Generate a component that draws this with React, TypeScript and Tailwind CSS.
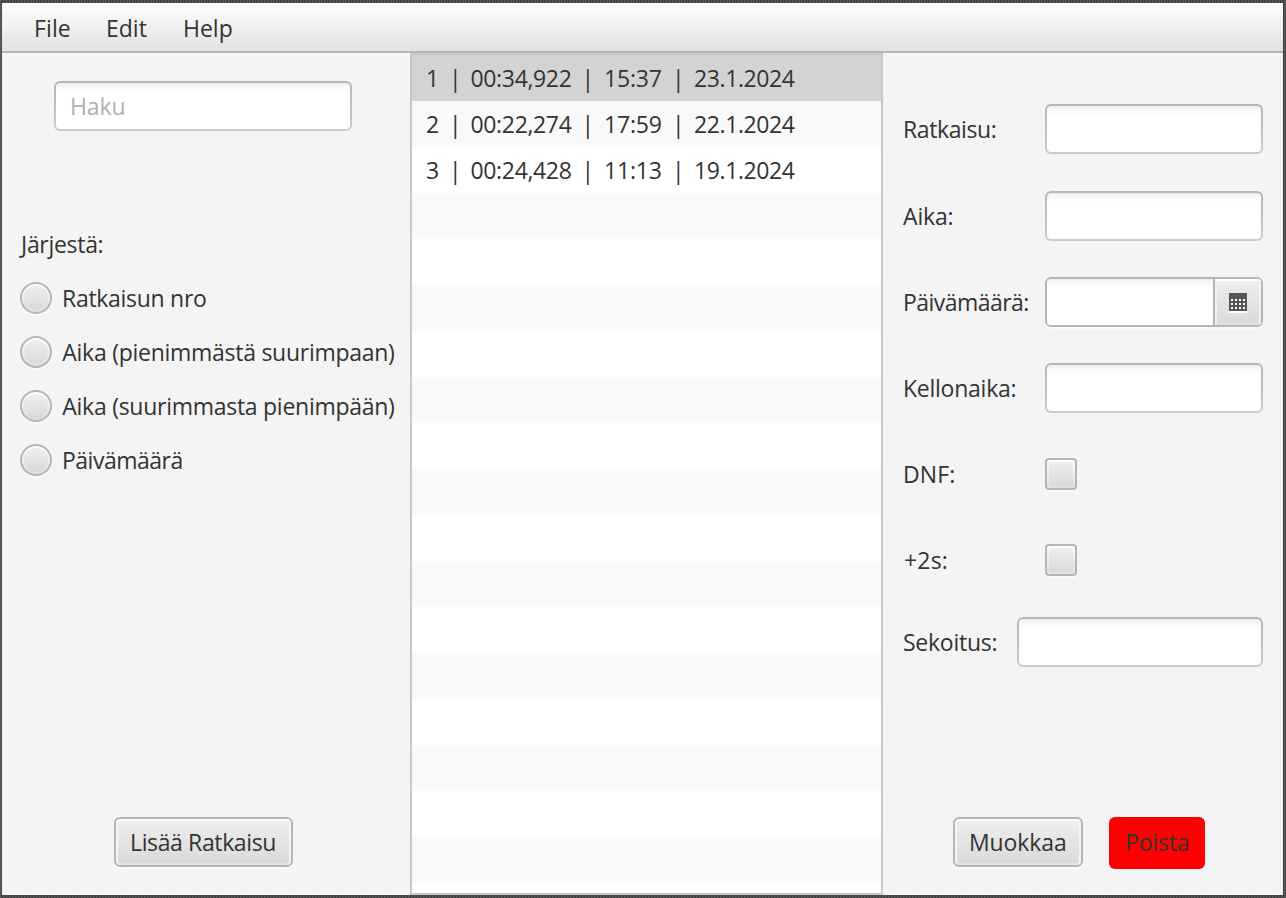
import type { ReactNode } from 'react';

const fieldFrame =
  'box-border h-[50px] shrink-0 rounded-[6px] bg-[linear-gradient(to_bottom,#b6b6b6,#cbcbcb)] p-[2px]';
const fieldInner =
  'h-full w-full rounded-[4px] border-0 bg-[linear-gradient(to_bottom,#ededed_0px,#f8f8f8_4px,#ffffff_9px)] leading-[46px] outline-none';
const raised = 'bg-[linear-gradient(to_bottom,#efefef,#d9d9d9)] border-2 border-[#b5b5b5]';

function Field({ width, placeholder, label }: { width: string; placeholder?: string; label: string }) {
  return (
    <div className={`${fieldFrame} ${width}`}>
      <input
        aria-label={label}
        placeholder={placeholder}
        className={`${fieldInner} block pl-[14px] tracking-[-0.1px] placeholder:text-[#b0b0b0] placeholder:opacity-100`}
      />
    </div>
  );
}

function Button({ children, className }: { children: ReactNode; className: string }) {
  return (
    <button
      className={`${raised} flex h-[50px] shrink-0 items-center rounded-[6px] p-[2px] leading-[46px] whitespace-nowrap shadow-[0_2px_0_0_#fcfcfc,inset_0_2px_0_0_#fdfdfd,inset_2px_0_0_0_#f5f5f5,inset_-2px_0_0_0_#f5f5f5,inset_0_-2px_0_0_#e3e3e3] ${className}`}
    >
      {children}
    </button>
  );
}

function Label({ children, spacing }: { children: ReactNode; spacing: string }) {
  return <span className={`leading-[50px] whitespace-nowrap ${spacing}`}>{children}</span>;
}

function CheckBox() {
  return (
    <div className="h-8 w-8 rounded-[4px] border-2 border-[#b5b5b5] bg-[linear-gradient(to_bottom,#fdfdfd,#e0e0e0)] p-[2px] shadow-[0_2px_0_0_#fbfbfb]">
      <div className="h-full w-full rounded-[2px] bg-[linear-gradient(to_bottom,#efefef,#d9d9d9)]" />
    </div>
  );
}

function CalendarIcon() {
  const cols = [2, 6, 10, 14];
  const rows = [6, 10, 14];
  return (
    <svg width="18" height="20" viewBox="0 0 18 20" shapeRendering="crispEdges">
      <rect y="2" width="18" height="18" fill="#fff" />
      <rect width="18" height="18" fill="#555" />
      {rows.map((y) => cols.map((x) => <rect key={`${x}-${y}`} x={x} y={y} width="2" height="2" fill="#fff" />))}
    </svg>
  );
}

const sortOptions = [
  { text: 'Ratkaisun nro', cls: 'pl-[10px] tracking-[-0.29px]' },
  { text: 'Aika (pienimmästä suurimpaan)', cls: 'pl-[10.3px] tracking-[-0.27px]' },
  { text: 'Aika (suurimmasta pienimpään)', cls: 'pl-[10.3px] tracking-[-0.27px]' },
  { text: 'Päivämäärä', cls: 'pl-[10px] tracking-[-0.5px]' },
];

const solves = [
  { n: '1', time: '00:34,922', clock: '15:37', date: '23.1.2024' },
  { n: '2', time: '00:22,274', clock: '17:59', date: '22.1.2024' },
  { n: '3', time: '00:24,428', clock: '11:13', date: '19.1.2024' },
];

const formRow = 'flex h-[50px] items-center';

export default function App() {
  return (
    <div className="flex h-[898px] w-[1286px] flex-col overflow-hidden bg-[#484848] bg-[repeating-linear-gradient(to_right,#5a5a5a_0px,#5a5a5a_1px,#3c3c3c_2px,#3c3c3c_3px)] pt-[3px] pr-[3px] pb-[3px] pl-[2px] font-['Open_Sans','Noto_Sans',sans-serif] text-[23px] text-[#333333]">
      <nav className="flex h-[50px] shrink-0 border-b-2 border-[#b5b5b5] bg-[linear-gradient(to_bottom,#fdfdfd,#e3e3e3)] pt-[2px] pl-[32px] leading-[46px]">
        <span className="w-[72px] tracking-[0.1px]">File</span>
        <span className="w-[77px]">Edit</span>
        <span>Help</span>
      </nav>

      <div className="flex h-[842px] bg-[#f4f4f4]">
        <aside className="flex w-[408px] shrink-0 flex-col">
          <div className="pt-[28px] pl-[52px]">
            <Field width="w-[298px]" placeholder="Haku" label="Haku" />
          </div>
          <div className="mt-[88px] pl-[19px]">
            <Label spacing="block tracking-[-0.3px]">Järjestä:</Label>
          </div>
          <div className="mt-[4px] flex flex-col gap-[4px] pl-[18px]">
            {sortOptions.map((o) => (
              <label key={o.text} className="flex h-[50px] items-center">
                <span className="h-8 w-8 shrink-0 rounded-full border-2 border-[#b5b5b5] bg-[linear-gradient(to_bottom,#fdfdfd,#e0e0e0)] p-[2px] shadow-[0_2px_0_0_#fbfbfb]">
                  <span className="block h-full w-full rounded-full bg-[linear-gradient(to_bottom,#efefef,#d9d9d9)]" />
                </span>
                <span className={`leading-[50px] whitespace-nowrap ${o.cls}`}>{o.text}</span>
              </label>
            ))}
          </div>
          <div className="mt-auto pb-[28px] pl-[112px]">
            <Button className="w-[179px] pl-[14px] tracking-[-0.37px]">Lisää Ratkaisu</Button>
          </div>
        </aside>

        <ul className="w-[473px] shrink-0 overflow-hidden border-2 border-[#c8c8c8] leading-[46px]">
          {Array.from({ length: 19 }, (_, i) => {
            const s = solves[i];
            const bg = i === 0 ? 'bg-[#d3d3d3]' : i % 2 ? 'bg-[#f9f9f9]' : 'bg-white';
            return (
              <li key={i} className={`flex h-[46px] pl-[14px] whitespace-nowrap ${bg}`}>
                {s && (
                  <>
                    <span className="w-[23px]">{s.n}</span>
                    <span className="w-[21.5px] text-center indent-[-9px]">|</span>
                    <span className="w-[111.5px] tracking-[-0.34px]">{s.time}</span>
                    <span className="w-[22px] indent-[-0.5px]">|</span>
                    <span className="w-[68px] tracking-[-0.2px]">{s.clock}</span>
                    <span className="w-[22px]">|</span>
                    <span className="tracking-[-0.4px]">{s.date}</span>
                  </>
                )}
              </li>
            );
          })}
        </ul>

        <main className="flex min-w-0 flex-1 flex-col pt-[51px] pr-[20px] pl-[20px]">
          <div className={formRow}>
            <div className="w-[142px] shrink-0"><Label spacing="tracking-[-0.4px]">Ratkaisu:</Label></div>
            <Field width="w-[218px]" label="Ratkaisu" />
          </div>
          <div className={`${formRow} mt-[37px]`}>
            <div className="w-[142px] shrink-0"><Label spacing="tracking-[-0.15px]">Aika:</Label></div>
            <Field width="w-[218px]" label="Aika" />
          </div>
          <div className={`${formRow} mt-[36px]`}>
            <div className="w-[142px] shrink-0"><Label spacing="tracking-[-0.55px]">Päivämäärä:</Label></div>
            <div className="flex h-[50px] w-[218px] overflow-hidden rounded-[6px] border-2 border-[#b5b5b5] shadow-[0_2px_0_0_#fbfbfb]">
              <input
                aria-label="Päivämäärä"
                className="block h-full w-[166px] border-0 bg-[linear-gradient(to_bottom,#ededed_0px,#f8f8f8_4px,#ffffff_9px)] outline-none"
              />
              <button aria-label="Kalenteri" className="flex h-full w-[48px] items-center justify-center border-l-2 border-[#b5b5b5] bg-[linear-gradient(to_bottom,#efefef,#d9d9d9)] pt-[2px] shadow-[inset_0_2px_0_0_#fdfdfd,inset_2px_0_0_0_#f1f1f1,inset_-2px_0_0_0_#f1f1f1,inset_0_-2px_0_0_#e0e0e0]">
                <CalendarIcon />
              </button>
            </div>
          </div>
          <div className={`${formRow} mt-[36px]`}>
            <div className="w-[142px] shrink-0"><Label spacing="tracking-[-0.25px]">Kellonaika:</Label></div>
            <Field width="w-[218px]" label="Kellonaika" />
          </div>
          <div className={`${formRow} mt-[36px]`}>
            <div className="w-[142px] shrink-0"><Label spacing="tracking-[0.1px]">DNF:</Label></div>
            <CheckBox />
          </div>
          <div className={`${formRow} mt-[36px]`}>
            <div className="w-[142px] shrink-0 pl-px"><Label spacing="tracking-[0.2px]">+2s:</Label></div>
            <CheckBox />
          </div>
          <div className={`${formRow} mt-[32px]`}>
            <div className="w-[114px] shrink-0"><Label spacing="tracking-[-0.25px]">Sekoitus:</Label></div>
            <Field width="w-[246px]" label="Sekoitus" />
          </div>
          <div className="mt-auto flex items-start gap-[26px] pb-[26px] pl-[50px]">
            <Button className="w-[130px] pl-[14px] tracking-[-0.1px]">Muokkaa</Button>
            <button className="h-[52px] w-[96px] rounded-[6px] bg-[#ff0000] pb-[2px] pl-[16px] text-left leading-[50px] tracking-[-0.2px]">
              Poista
            </button>
          </div>
        </main>
      </div>
    </div>
  );
}
